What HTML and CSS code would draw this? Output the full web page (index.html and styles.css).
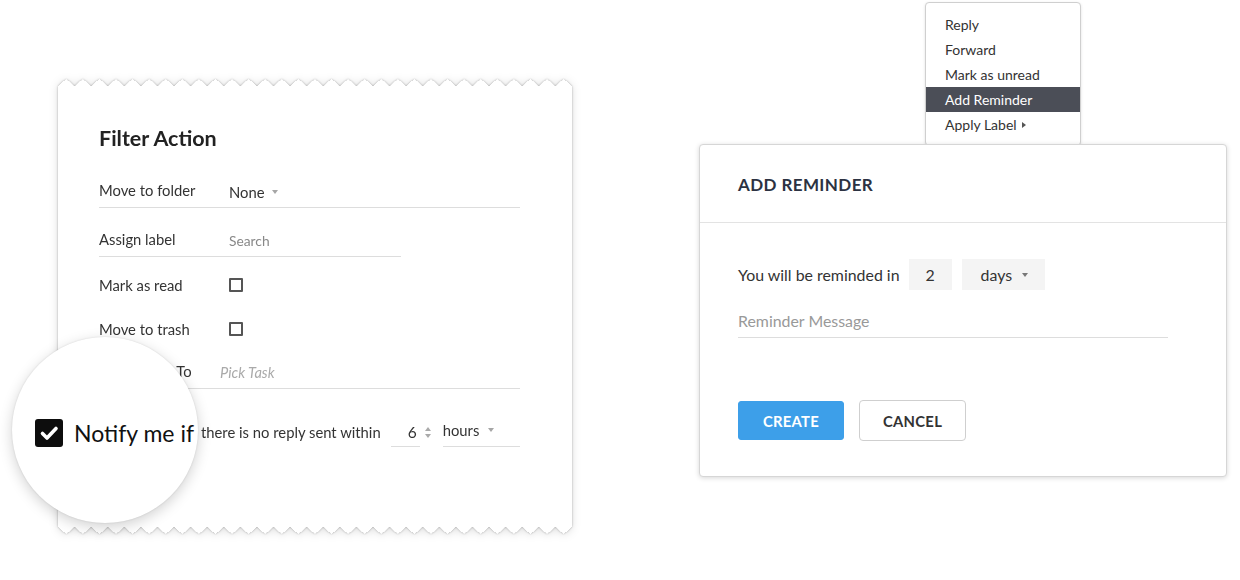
FILE: index.html
```html
<!DOCTYPE html>
<html lang="en">
<head>
<meta charset="utf-8">
<title>Filter Action &amp; Add Reminder</title>
<link rel="stylesheet" href="styles.css">
</head>
<body>
<div class="stage">
  <section class="left-scene">
    <div class="paper-shadow">
      <div class="paper">
        <h2 class="paper-title">Filter Action</h2>

        <div class="row row-line row-wide r1">
          <span class="label">Move to folder</span>
          <span class="select">None <span class="caret"></span></span>
        </div>

        <div class="row row-line row-narrow r2">
          <span class="label">Assign label</span>
          <span class="placeholder">Search</span>
        </div>

        <div class="row r3">
          <span class="label">Mark as read</span>
          <span class="checkbox"></span>
        </div>

        <div class="row r4">
          <span class="label">Move to trash</span>
          <span class="checkbox"></span>
        </div>

        <div class="row row-line row-wide r5">
          <span class="label label-task">Assign Task To</span>
          <span class="placeholder italic">Pick Task</span>
        </div>

        <div class="notify">
          <span class="notify-lead"><span class="checkbox checkbox-on"></span></span>
          <span class="notify-text">there is no reply sent within</span>
          <span class="num-field"><span class="num-value">6</span></span>
          <span class="spinner"><span class="spin-up"></span><span class="spin-down"></span></span>
          <span class="unit-field">hours <span class="caret"></span></span>
        </div>
      </div>
    </div>

    <div class="magnifier">
      <div class="magnifier-content">
        <span class="big-check">
          <svg width="28" height="28" viewBox="0 0 28 28"><path d="M7.5 14.5 L12 19 L21 9.5" fill="none" stroke="#fff" stroke-width="3.6" stroke-linecap="round" stroke-linejoin="round"/></svg>
        </span>
        <span class="big-text">Notify me if</span>
      </div>
    </div>
  </section>

  <section class="right-scene">
    <ul class="menu">
      <li class="menu-item">Reply</li>
      <li class="menu-item">Forward</li>
      <li class="menu-item">Mark as unread</li>
      <li class="menu-item menu-item-active">Add Reminder</li>
      <li class="menu-item">Apply Label <span class="menu-arrow"></span></li>
    </ul>

    <div class="dialog">
      <div class="dialog-header">ADD REMINDER</div>
      <div class="dialog-body">
        <div class="remind-row">
          <span class="remind-label">You will be reminded in</span>
          <span class="box box-num">2</span>
          <span class="box box-unit">days <span class="caret caret-dark"></span></span>
        </div>
        <div class="message-field">Reminder Message</div>
        <div class="actions">
          <button class="btn btn-primary">CREATE</button>
          <button class="btn btn-secondary">CANCEL</button>
        </div>
      </div>
    </div>
  </section>
</div>
</body>
</html>
```

FILE: styles.css
```css
* { box-sizing: border-box; }

html, body {
  margin: 0;
  padding: 0;
  background: #fff;
}

body {
  width: 1240px;
  height: 580px;
  overflow: hidden;
  font-family: "Lato", "Open Sans", sans-serif;
  color: #333;
}

.stage {
  display: flex;
  align-items: flex-start;
}

/* ---------- left scene ---------- */
.left-scene {
  position: relative;
  width: 699px;
  height: 580px;
  flex: none;
}

.paper-shadow {
  margin: 86px 0 0 58px;
  width: 514px;
  filter: drop-shadow(0 0 1px rgba(0, 0, 0, .28)) drop-shadow(0 1px 4px rgba(0, 0, 0, .13));
}

.paper {
  position: relative;
  background: #fff;
  height: 441px;
  padding: 39px 0 0 41px;
}

.paper::before,
.paper::after {
  content: "";
  position: absolute;
  left: 0;
  right: 0;
  height: 7px;
  background-repeat: repeat-x;
  background-size: calc(100% / 31) 7px;
}

.paper::before {
  top: -7px;
  background-image: conic-gradient(from 130deg at 50% 0, #fff 100deg, transparent 0);
}

.paper::after {
  bottom: -7px;
  background-image: conic-gradient(from -50deg at 50% 100%, #fff 100deg, transparent 0);
}

.paper-title {
  margin: 0;
  font-size: 21.5px;
  line-height: 26px;
  font-weight: 700;
  color: #222;
}

.row {
  display: flex;
  align-items: center;
  height: 34px;
  font-size: 14.8px;
}

.row-line {
  height: 35px;
  border-bottom: 1px solid #ddd;
}

.row-wide { width: 421px; }
.row-narrow { width: 302px; }

.r1 { margin-top: 22px; }
.r2 { margin-top: 14px; }
.r3 { margin-top: 11px; }
.r4 { margin-top: 10px; }
.r5 { margin-top: 8px; }

.label {
  width: 130px;
  flex: none;
  color: #333;
}

.label-task { width: 121px; }

.select {
  display: inline-flex;
  align-items: center;
  gap: 7px;
  color: #333;
  padding-top: 3px;
}

.caret {
  display: inline-block;
  width: 0;
  height: 0;
  border-left: 3.5px solid transparent;
  border-right: 3.5px solid transparent;
  border-top: 4px solid #a6a6a6;
}

.placeholder {
  font-size: 13.8px;
  color: #888;
  padding-top: 2px;
}

.italic {
  font-style: italic;
  color: #aaa;
  font-size: 14.6px;
}

.checkbox {
  display: inline-block;
  width: 14px;
  height: 14px;
  border: 2px solid #555;
  border-radius: 1px;
}

.checkbox-on {
  background: #111;
  border-color: #111;
}

.notify {
  display: flex;
  align-items: center;
  height: 30px;
  margin-top: 28px;
  font-size: 14.8px;
  color: #333;
}

.notify-lead {
  display: inline-flex;
  align-items: center;
  width: 102px;
  flex: none;
}

.notify-text {
  margin-right: 10px;
}

.num-field {
  display: flex;
  align-items: center;
  justify-content: flex-end;
  width: 29px;
  height: 30px;
  border-bottom: 1px solid #ddd;
  padding: 0 3px 0 0;
  font-size: 15.5px;
}

.spinner {
  display: flex;
  flex-direction: column;
  gap: 3px;
  margin: 0 12px 0 5px;
}

.spin-up,
.spin-down {
  width: 0;
  height: 0;
  border-left: 3.5px solid transparent;
  border-right: 3.5px solid transparent;
}

.spin-up { border-bottom: 4px solid #aaa; }
.spin-down { border-top: 4px solid #aaa; }

.unit-field {
  display: flex;
  align-items: center;
  gap: 9px;
  width: 77px;
  height: 30px;
  border-bottom: 1px solid #ddd;
  font-size: 14.8px;
  padding-bottom: 3px;
}

/* magnifier */
.magnifier {
  position: absolute;
  left: 12px;
  top: 337px;
  width: 186px;
  height: 186px;
  border-radius: 50%;
  background: #fff;
  box-shadow: 0 0 2px rgba(0, 0, 0, .12), 0 4px 14px rgba(0, 0, 0, .18);
  overflow: hidden;
}

.magnifier-content {
  display: flex;
  align-items: center;
  gap: 11px;
  padding: 81px 0 0 23px;
  white-space: nowrap;
}

.big-check {
  display: flex;
  width: 28px;
  height: 28px;
  border-radius: 3px;
  background: #0d0d0d;
  flex: none;
}

.big-text {
  font-size: 23px;
  line-height: 30px;
  color: #111;
}

/* ---------- right scene ---------- */
.right-scene {
  width: 527px;
  flex: none;
  padding-top: 2px;
}

.menu {
  list-style: none;
  margin: 0 0 0 226px;
  padding: 9px 0 8px;
  width: 156px;
  background: #fff;
  border: 1px solid #cfcfcf;
  border-radius: 4px;
  box-shadow: 0 1px 3px rgba(0, 0, 0, .12);
  font-size: 14px;
  color: #333;
}

.menu-item {
  display: flex;
  align-items: center;
  gap: 5px;
  height: 25px;
  padding-left: 19px;
}

.menu-item-active {
  background: #4b4e57;
  color: #fff;
}

.menu-arrow {
  width: 0;
  height: 0;
  border-top: 3.5px solid transparent;
  border-bottom: 3.5px solid transparent;
  border-left: 4px solid #555;
}

.dialog {
  position: relative;
  margin-top: -2px;
  width: 528px;
  height: 333px;
  background: #fff;
  border: 1px solid #d6d6d6;
  border-radius: 4px;
  box-shadow: 0 1px 5px rgba(0, 0, 0, .16);
}

.dialog-header {
  height: 78px;
  padding: 29px 0 0 38px;
  border-bottom: 1px solid #e3e3e3;
  font-size: 17px;
  line-height: 22px;
  font-weight: 700;
  letter-spacing: .4px;
  color: #2c3242;
}

.dialog-body {
  padding: 36px 0 0 38px;
}

.remind-row {
  display: flex;
  align-items: center;
  height: 31px;
  font-size: 15.9px;
  color: #333;
}

.remind-label {
  margin-right: 9px;
}

.box {
  display: flex;
  align-items: center;
  height: 31px;
  background: #f4f4f4;
  font-size: 15.9px;
  color: #333;
}

.box-num {
  width: 43px;
  justify-content: center;
  margin-right: 10px;
}

.box-unit {
  width: 83px;
  padding-left: 19px;
  gap: 10px;
}

.caret-dark { border-top-color: #777; }

.message-field {
  margin-top: 17px;
  width: 430px;
  padding: 4px 0 6px;
  line-height: 20px;
  border-bottom: 1px solid #ddd;
  font-size: 15.9px;
  color: #999;
}

.actions {
  display: flex;
  align-items: center;
  gap: 15px;
  margin-top: 62px;
}

.btn {
  height: 40px;
  font-family: inherit;
  font-size: 14.8px;
  font-weight: 700;
  letter-spacing: .3px;
  border-radius: 3px;
  cursor: pointer;
}

.btn-primary {
  width: 106px;
  height: 39px;
  background: #3d9fe9;
  border: 1px solid #3d9fe9;
  color: #fff;
}

.btn-secondary {
  width: 107px;
  height: 41px;
  background: #fff;
  border: 1px solid #cfcfcf;
  border-radius: 4px;
  color: #333;
}
```
